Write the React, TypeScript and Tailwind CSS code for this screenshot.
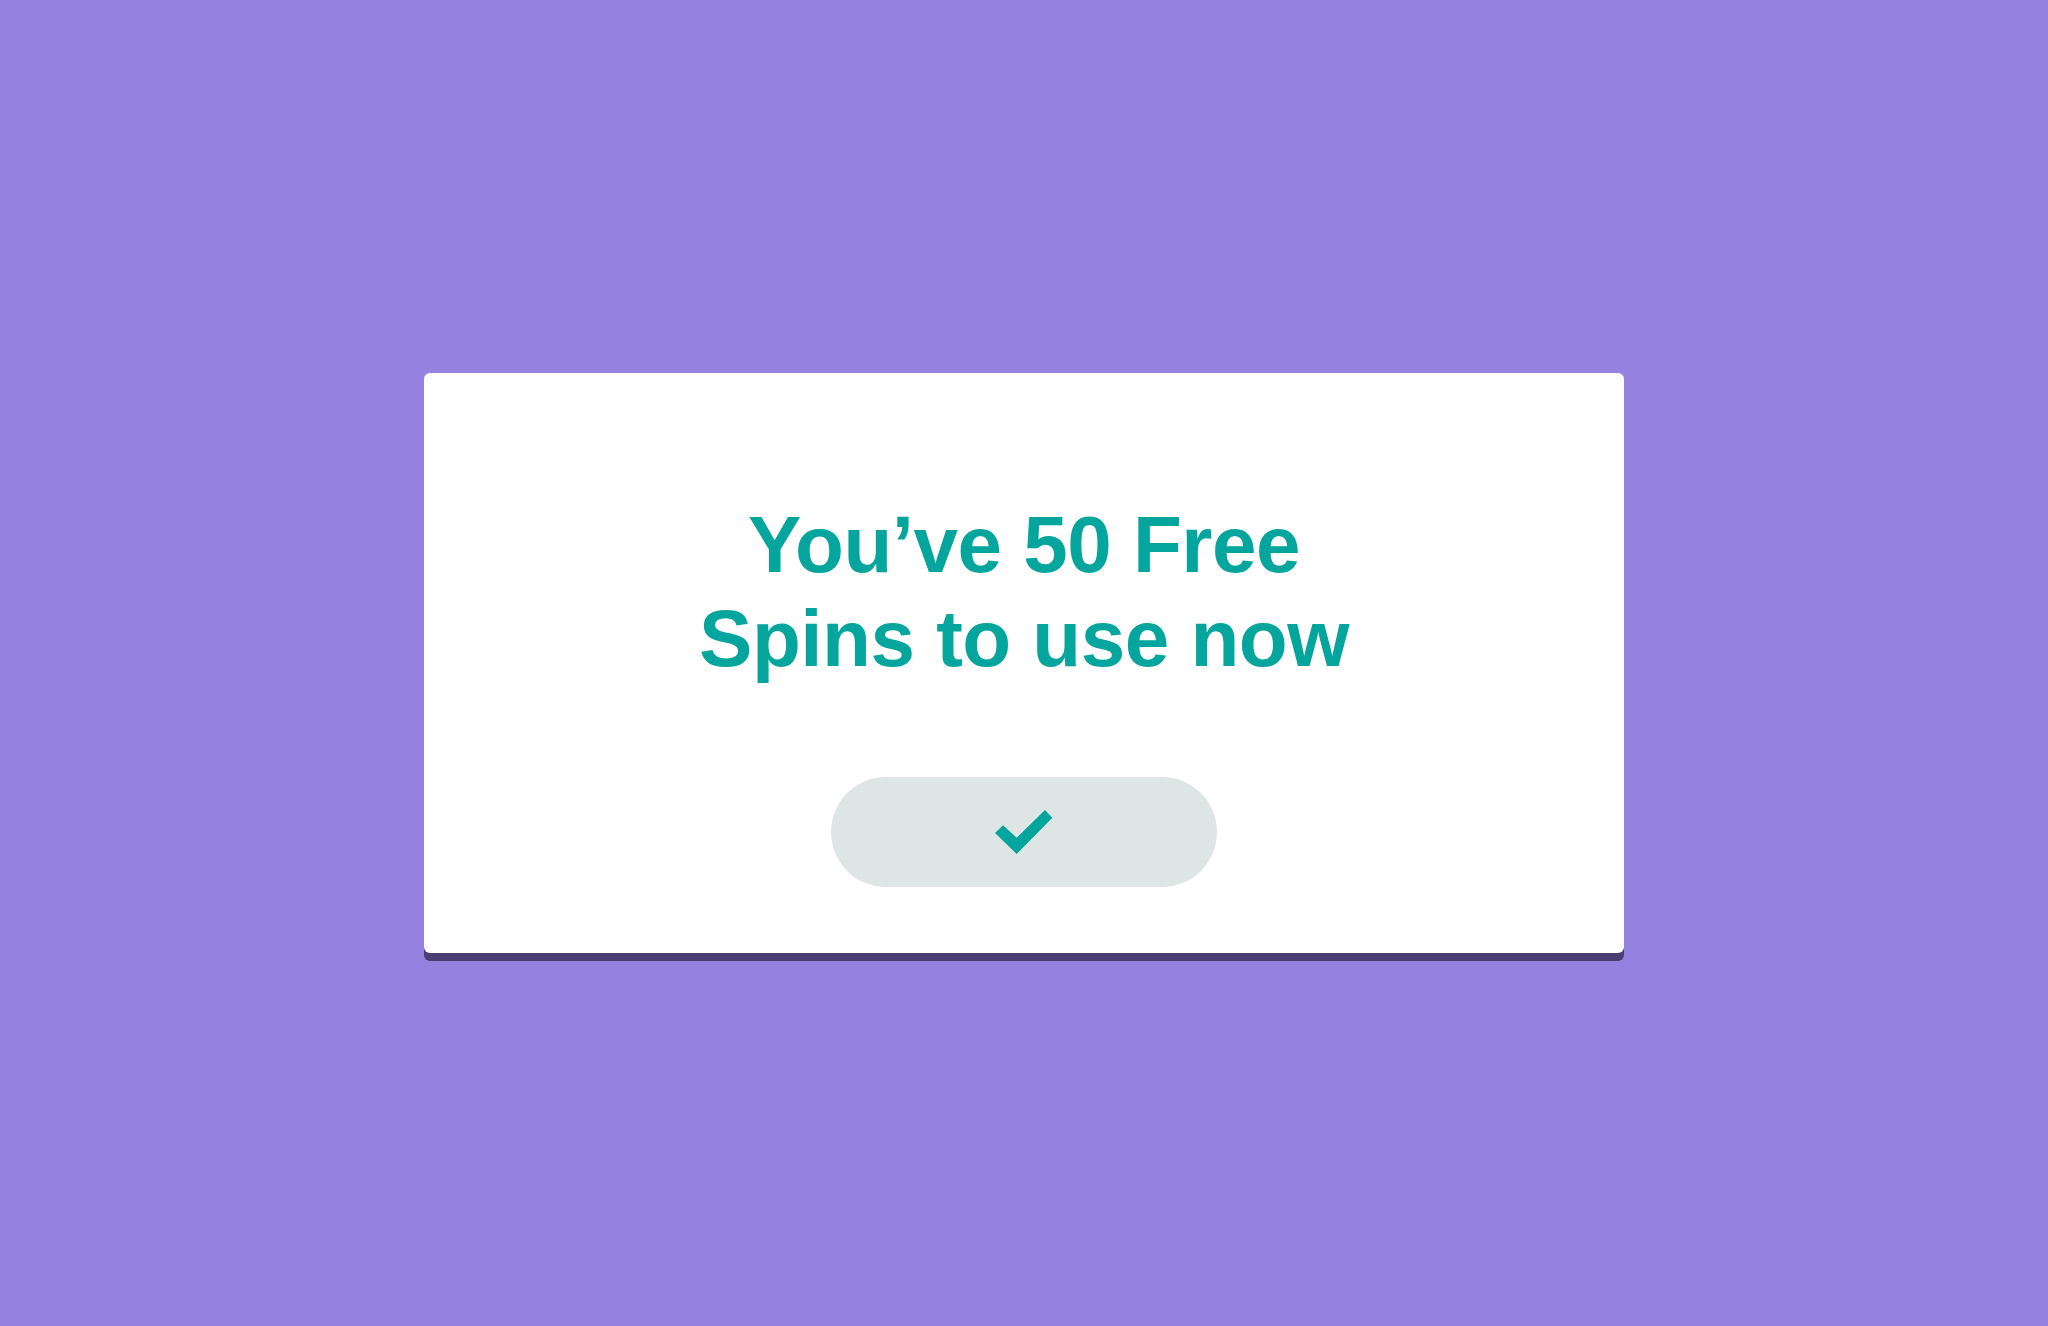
const CheckIcon = () => (
  <svg viewBox="0 0 58 44" className="h-[44px] w-[58px]" fill="#03a59d" aria-hidden="true">
    <polygon points="0,23 8,15.3 21.7,27.8 50,0 57.3,7.7 21.7,44" />
  </svg>
);

const FreeSpinsModal = () => {
  return (
    <div className="flex h-[580px] w-[1200px] flex-col items-center rounded-[6px] bg-white pt-[125px] pb-[66px] shadow-[0_8px_0_#4a3d72]">
      <h1
        className="text-center text-[80px] font-bold leading-[94px] tracking-[-0.5px] text-[#03a59d]"
        style={{ fontFamily: '"Liberation Sans", Arial, sans-serif' }}
      >
        You’ve 50 Free
        <br />
        Spins to use now
      </h1>
      <button
        type="button"
        className="mt-[91px] flex h-[110px] w-[386px] items-center justify-center rounded-full bg-[#dde6e5]"
      >
        <CheckIcon />
      </button>
    </div>
  );
};

export default function App() {
  return (
    <div className="flex h-[1326px] w-full items-center justify-center bg-[#9482e0]">
      <FreeSpinsModal />
    </div>
  );
}
